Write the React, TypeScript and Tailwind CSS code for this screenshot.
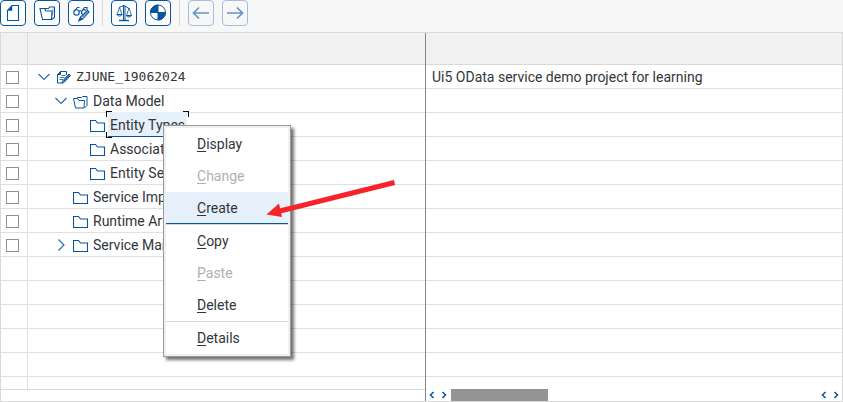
import React from "react";

type IconProps = { className?: string };

const FolderIcon = ({ className = "" }: IconProps) => (
  <svg viewBox="0 0 16 14" className={`h-[14px] w-4 shrink-0 ${className}`} fill="none" stroke="#0854a0">
    <path d="M.5 12.500V1.500h5l2 2.500h7v8.500z" strokeWidth="1.100" />
  </svg>
);

const OpenFolderIcon = ({ className = "" }: IconProps) => (
  <svg viewBox="0 0 16 14" className={`h-[14px] w-4 shrink-0 ${className}`} fill="none" stroke="#0854a0">
    <path d="M.5 3.500h4l1.500 2h5.500l-.5 7.500H2.500z" />
    <path d="M4.500 3.500V2.500H8.500L9.500 1.500h4.500v9L11.500 13" />
  </svg>
);

const DocEditIcon = () => (
  <svg viewBox="0 0 15 15" className="h-[15px] w-[15px] shrink-0" fill="none" stroke="#0854a0" strokeLinejoin="round">
    <path d="M10.500 5V1.500h-6l-3 3v8.500H7" />
    <path d="M1.500 4.500h3v-3z" fill="#0854a0" />
    <path d="M5.500 5.500h4M3.500 7.500h5M3.500 9.500h3.500" strokeWidth=".8" />
    <path d="M13 4l1.500 1.500-6 6.500-2.500 1 1-2.500z" fill="#fff" />
    <path d="M7.500 11.500l6-6.500" strokeWidth="1.300" />
  </svg>
);

const Chevron = ({ open }: { open: boolean }) => (
  <svg viewBox="0 0 12 12" className="h-3 w-3 shrink-0" fill="none" stroke="#2a6cad" strokeWidth="1.200">
    <path d={open ? "M.5 3L6 8.500 11.500 3" : "M3.500 .5L9 6l-5.500 5.500"} />
  </svg>
);

const NewIcon = () => (
  <svg viewBox="0 0 24 24" className="h-6 w-6" fill="none" stroke="#0854a0">
    <path d="M11 4.500h6.500v15h-11V9" strokeWidth="1.100" />
    <path d="M6 9.500l5-5.500v5.500z" fill="#0854a0" strokeWidth=".5" />
  </svg>
);

const OpenIcon = () => (
  <svg viewBox="0 0 24 24" className="h-6 w-6" fill="none" stroke="#0854a0" strokeWidth="1.100">
    <path d="M5 7.500h4.500l1.500 2.500h6l-.5 8.500H7.500z" />
    <path d="M10.500 8.500V7.500h3l1-1.500h5v10.500l-3 2" />
    <path d="M18 7.500l-.5 7" strokeWidth=".6" />
  </svg>
);

const GlassesIcon = () => (
  <svg viewBox="0 0 24 24" className="h-6 w-6" fill="none" stroke="#0854a0" strokeWidth="1.100">
    <circle cx="7.500" cy="11.500" r="2.700" />
    <path d="M5 10.500L8.500 6.500h2M10 10.500c1-1 2-1 2.500 0M13.500 13.500a2.500 2.500 0 1 1 3.500-4M13.500 9l2-2.500h2.500V9" />
    <path d="M18.500 9.500l1.500 1.500-6.500 7-3.500 1.500 1.500-3.500z" fill="#fff" />
    <path d="M13 16.500l6-6" strokeWidth="1" />
    <path d="M10 19.500l1.500-3 1.500 1.500z" fill="#0854a0" />
  </svg>
);

const ScaleIcon = () => (
  <svg viewBox="0 0 24 24" className="h-6 w-6" fill="none" stroke="#0854a0">
    <path d="M11.500 4v15M13 5v14" />
    <path d="M7 19.500h10" strokeWidth="1.400" />
    <path d="M7 6.500l5-2 5 3" />
    <path d="M7.500 6.500l-2.500 7M7.500 6.500l2.500 7M17 7l-2.500 7.500M17 7l2.500 7.500" strokeWidth=".8" />
    <path d="M5 13.500h5c-.5 2-4.500 2-5 0zM14.500 14.500h5c-.5 2-4.500 2-5 0z" strokeWidth="1" />
  </svg>
);

const QuarterIcon = () => (
  <svg viewBox="0 0 24 24" className="h-6 w-6" fill="none" stroke="#0854a0">
    <circle cx="12" cy="11.500" r="7.500" fill="#fff" />
    <path d="M12 4v7.500H4.500A7.500 7.500 0 0 1 12 4zM12 11.500h7.500A7.500 7.500 0 0 1 12 19z" fill="#0854a0" />
  </svg>
);

const ArrowIcon = ({ back }: { back?: boolean }) => (
  <svg viewBox="0 0 24 24" className="h-6 w-6" fill="none" stroke="#0854a0" strokeWidth="1.700">
    <path d={back ? "M20 12H5M10 6.500L4.500 12l5.500 5.500" : "M4 12h15M14 6.500l5.500 5.500-5.500 5.500"} />
  </svg>
);

function ToolButton({ label, disabled, children }: { label: string; disabled?: boolean; children: React.ReactNode }) {
  return (
    <button
      type="button"
      aria-label={label}
      disabled={disabled}
      className="flex h-[26px] w-[26px] shrink-0 items-center justify-center rounded border border-[#0854a0] bg-white disabled:border-[#a3bfdb] disabled:bg-[#f7f7f7] disabled:[&>svg]:opacity-60"
    >
      {children}
    </button>
  );
}

const Separator = () => <div className="h-[26px] w-px bg-[#d9d9d9]" />;

type Node = { label: string; level: number; open?: boolean; expandable?: boolean; icon: "doc" | "open" | "folder"; selected?: boolean };

const nodes: Node[] = [
  { label: "ZJUNE_19062024", level: 0, expandable: true, open: true, icon: "doc" },
  { label: "Data Model", level: 1, expandable: true, open: true, icon: "open" },
  { label: "Entity Types", level: 2, icon: "folder", selected: true },
  { label: "Associations", level: 2, icon: "folder" },
  { label: "Entity Sets", level: 2, icon: "folder" },
  { label: "Service Implementation", level: 1, icon: "folder" },
  { label: "Runtime Artifacts", level: 1, icon: "folder" },
  { label: "Service Maintenance", level: 1, expandable: true, open: false, icon: "folder" },
];

const indents = ["pl-2.5", "pl-[27px]", "pl-11"];
const rows: (Node | null)[] = [...nodes, ...Array<null>(6).fill(null)];

function NodeLabel({ node }: { node: Node }) {
  if (node.selected) {
    return (
      <span className="relative flex h-[25px] items-center border-b border-[#0854a0] bg-[#e5f0fa] px-0.5 pt-0.5">
        {node.label}
        <i className="absolute -top-px -left-0.5 h-1.5 w-1.5 border-t border-l border-black" />
        <i className="absolute -top-px -right-0.5 h-1.5 w-1.5 border-t border-r border-black" />
        <i className="absolute -bottom-0.5 -left-0.5 h-1.5 w-1.5 border-b border-l border-black" />
      </span>
    );
  }
  return (
    <span className={node.level === 0 ? "px-0.5 pt-0.5 font-['DejaVu_Sans_Mono',monospace] text-[13px]" : "px-0.5"}>
      {node.label}
    </span>
  );
}

function TreePanel() {
  return (
    <div className="flex w-[424px] shrink-0 flex-col">
      <div className="min-h-0 flex-1 overflow-hidden border-b border-[#d9d9d9]">
        <table className="w-full table-fixed border-separate border-spacing-0">
          <thead>
            <tr className="bg-[#f1f1f1]">
              <th aria-label="Select" className="h-8 w-[27px] border-r border-b border-[#d9d9d9] p-0" />
              <th aria-label="Object" className="h-8 border-b border-[#d9d9d9] p-0" />
            </tr>
          </thead>
          <tbody>
            {rows.map((node, i) => (
              <tr key={i}>
                <td className="h-6 border-r border-b border-[#e0e0e0] px-0 pt-0.5 pb-0">
                  {node && (
                    <input
                      type="checkbox"
                      aria-label={`Select ${node.label}`}
                      className="ml-[5px] block h-[13px] w-[13px] appearance-none border border-[#89919a] bg-white"
                    />
                  )}
                </td>
                <td className="h-6 border-b border-[#e0e0e0] p-0">
                  {node && (
                    <div className={`flex h-[23px] items-center whitespace-nowrap ${indents[node.level]}`}>
                      <span className="mr-1.5 flex w-3 shrink-0">
                        {node.expandable && <Chevron open={!!node.open} />}
                      </span>
                      <span className="mr-0.5 flex w-4 shrink-0 pt-0.5">
                        {node.icon === "doc" && <DocEditIcon />}
                        {node.icon === "open" && <OpenFolderIcon />}
                        {node.icon === "folder" && <FolderIcon />}
                      </span>
                      <NodeLabel node={node} />
                    </div>
                  )}
                </td>
              </tr>
            ))}
          </tbody>
        </table>
      </div>
      <div className="h-[11px] shrink-0" />
    </div>
  );
}

const ScrollArrow = ({ label, left }: { label: string; left?: boolean }) => (
  <button type="button" aria-label={label} className="flex h-3 w-3 items-center justify-center">
    <svg viewBox="0 0 6 8" className="h-2 w-1.5" fill="none" stroke="#0854a0" strokeWidth="1.500">
      <path d={left ? "M4.500 1L1.500 4l3 3" : "M1.500 1l3 3-3 3"} />
    </svg>
  </button>
);

function DescriptionPanel() {
  return (
    <div className="flex min-w-0 flex-1 flex-col border-l border-[#858585]">
      <div className="min-h-0 flex-1 overflow-hidden">
        <table className="w-full table-fixed border-separate border-spacing-0">
          <thead>
            <tr className="bg-[#f1f1f1]">
              <th aria-label="Description" className="h-8 border-b border-[#d9d9d9] p-0" />
            </tr>
          </thead>
          <tbody>
            {rows.slice(0, 13).map((_, i) => (
              <tr key={i}>
                <td className="h-6 border-b border-[#e0e0e0] py-0 pl-1.5 whitespace-nowrap">
                  {i === 0 ? "Ui5 OData service demo project for learning" : null}
                </td>
              </tr>
            ))}
          </tbody>
        </table>
      </div>
      <div className="flex h-3 shrink-0 items-center">
        <ScrollArrow label="Scroll to start" left />
        <ScrollArrow label="Scroll right" />
        <div className="ml-px h-3 w-[97px] bg-[#949494]" />
        <div className="flex-1" />
        <ScrollArrow label="Scroll left" left />
        <ScrollArrow label="Scroll to end" />
      </div>
    </div>
  );
}

function MenuItem({ label, active, disabled }: { label: string; active?: boolean; disabled?: boolean }) {
  return (
    <button
      type="button"
      role="menuitem"
      disabled={disabled}
      className={`block h-8 w-full border-b pl-[31px] text-left disabled:text-[#b0b0b0] ${active ? "border-[#0854a0] bg-[#e5f0fa]" : "border-transparent"}`}
    >
      <span className="underline underline-offset-2">{label[0]}</span>
      {label.slice(1)}
    </button>
  );
}

function ContextMenu() {
  return (
    <div
      role="menu"
      className="absolute top-[125px] left-[163px] w-32 border border-[#999999] bg-[#f0f0f0] p-0.5 shadow-[3px_3px_3px_rgba(0,0,0,0.55)]"
    >
      <div className="bg-white">
        <MenuItem label="Display" />
        <MenuItem label="Change" disabled />
        <MenuItem label="Create" active />
        <div className="h-px bg-[#d9d9d9]" />
        <MenuItem label="Copy" />
        <MenuItem label="Paste" disabled />
        <MenuItem label="Delete" />
        <div className="h-px bg-[#d9d9d9]" />
        <MenuItem label="Details" />
      </div>
    </div>
  );
}

export default function App() {
  return (
    <div className="relative flex h-screen flex-col overflow-hidden bg-[#f7f7f7] font-['Roboto',sans-serif] text-sm text-[#32363a]">
      <div role="toolbar" className="flex h-8 shrink-0 items-start gap-2">
        <ToolButton label="New"><NewIcon /></ToolButton>
        <ToolButton label="Open"><OpenIcon /></ToolButton>
        <ToolButton label="Display or change"><GlassesIcon /></ToolButton>
        <Separator />
        <ToolButton label="Check consistency"><ScaleIcon /></ToolButton>
        <ToolButton label="Generate"><QuarterIcon /></ToolButton>
        <Separator />
        <ToolButton label="Back" disabled><ArrowIcon back /></ToolButton>
        <ToolButton label="Forward" disabled><ArrowIcon /></ToolButton>
      </div>
      <div className="flex min-h-0 flex-1 border border-[#d9d9d9] bg-white">
        <TreePanel />
        <DescriptionPanel />
      </div>
      <ContextMenu />
      <svg viewBox="0 0 132 40" className="pointer-events-none absolute top-[178px] left-[265px] h-10 w-[132px]">
        <path d="M129.500 4.500L15 33" stroke="#f5242a" strokeWidth="5" />
        <path d="M1.500 36.500L14 25.500l3 13.500z" fill="#f5242a" />
      </svg>
    </div>
  );
}
